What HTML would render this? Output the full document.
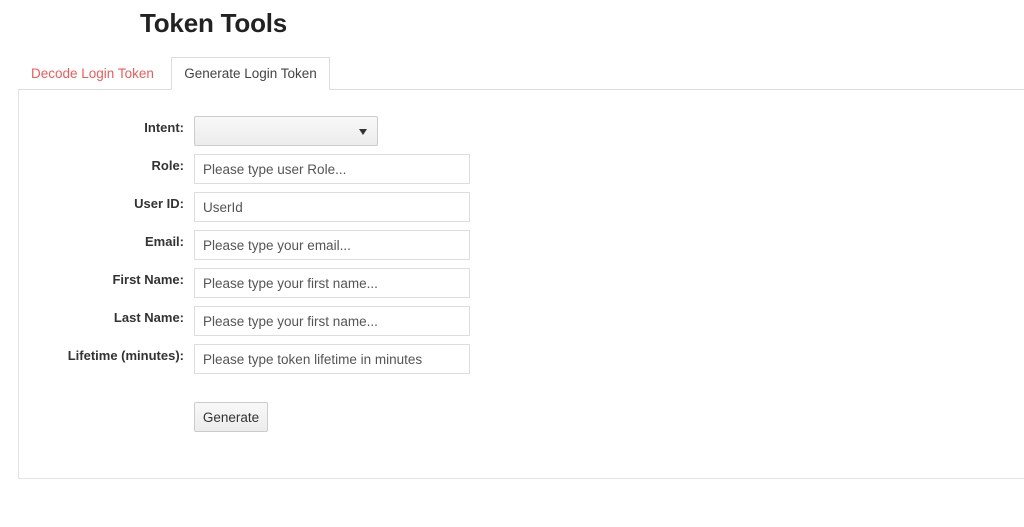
<!DOCTYPE html>
<html><head><style>
*{box-sizing:border-box}
body{margin:0;width:1024px;height:527px;background:#fff;font-family:"Liberation Sans",sans-serif;font-size:14px;color:#333;position:relative;overflow:hidden}
h1{position:absolute;left:140px;top:5px;margin:0;font-size:26px;font-weight:bold;color:#222;line-height:36px;letter-spacing:-0.2px}
.tabline{position:absolute;left:18px;right:0;top:89px;border-top:1px solid #ddd}
.tab1{position:absolute;left:31px;top:66px;color:#f05a5a;font-size:13.5px}
.tab2{position:absolute;left:171px;top:57px;width:159px;height:33px;border:1px solid #ddd;border-bottom:1px solid #fff;background:#fff;font-size:13.5px;padding-top:8px;text-align:center;color:#444}
.panel{position:absolute;left:18px;top:89px;width:1020px;height:390px;border:1px solid #e3e3e3;border-top:none}
.lbl{position:absolute;right:840px;font-weight:bold;font-size:13px;color:#333;text-align:right;white-space:nowrap}
.inp{position:absolute;left:194px;width:276px;height:30px;border:1px solid #ddd;font-size:13.5px;color:#555;padding:7px 8px;white-space:nowrap}
.sel{position:absolute;left:194px;top:116px;width:184px;height:30px;border:1px solid #ccc;border-radius:2px;background:linear-gradient(#f8f8f8,#ececec)}
.sel:after{content:"";position:absolute;right:10px;top:12px;border-left:4px solid transparent;border-right:4px solid transparent;border-top:6px solid #333}
.btn{position:absolute;left:194px;top:402px;width:74px;height:30px;border:1px solid #ccc;border-radius:2px;background:linear-gradient(#f8f8f8,#ececec);font-size:13.5px;color:#333;text-align:center;padding-top:7px}
</style></head><body>
<h1>Token Tools</h1>
<div class="tabline"></div>
<div class="panel"></div>
<div class="tab1">Decode Login Token</div>
<div class="tab2">Generate Login Token</div>
<div class="lbl" style="top:120px">Intent:</div>
<div class="sel"></div>
<div class="lbl" style="top:158px">Role:</div>
<div class="inp" style="top:154px">Please type user Role...</div>
<div class="lbl" style="top:196px">User ID:</div>
<div class="inp" style="top:192px">UserId</div>
<div class="lbl" style="top:234px">Email:</div>
<div class="inp" style="top:230px">Please type your email...</div>
<div class="lbl" style="top:272px">First Name:</div>
<div class="inp" style="top:268px">Please type your first name...</div>
<div class="lbl" style="top:310px">Last Name:</div>
<div class="inp" style="top:306px">Please type your first name...</div>
<div class="lbl" style="top:348px">Lifetime (minutes):</div>
<div class="inp" style="top:344px">Please type token lifetime in minutes</div>
<div class="btn">Generate</div>
</body></html>
